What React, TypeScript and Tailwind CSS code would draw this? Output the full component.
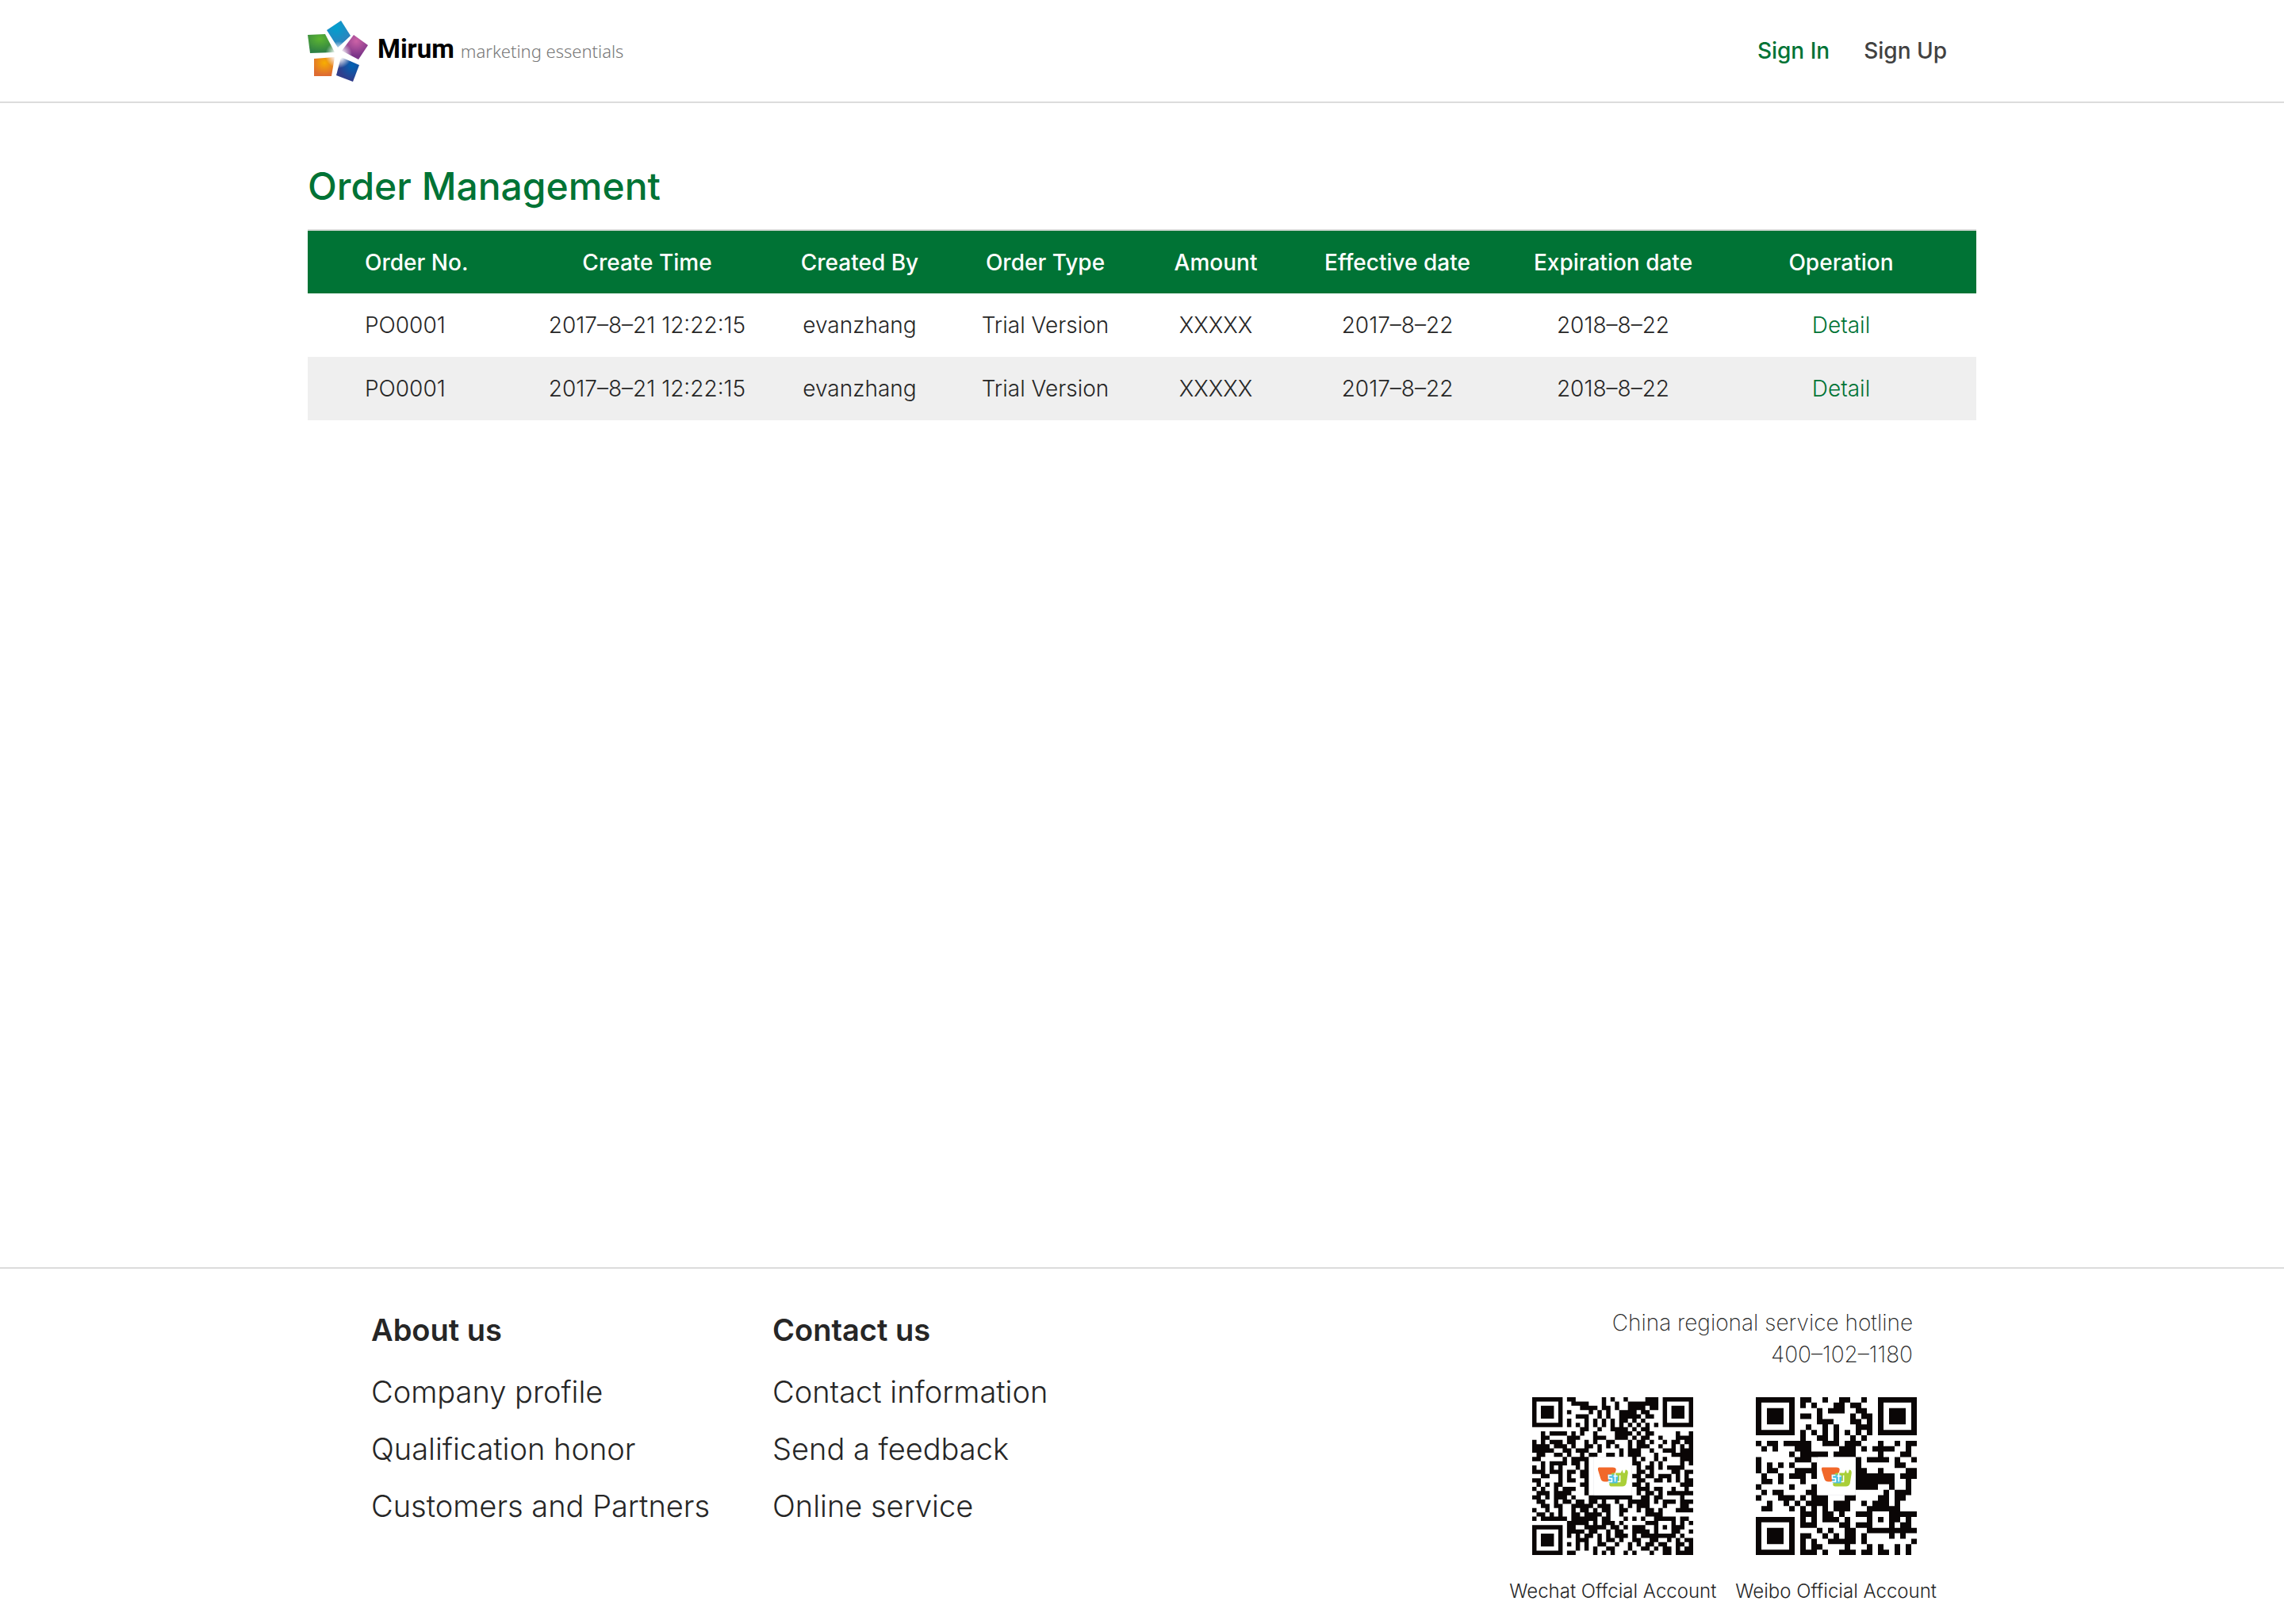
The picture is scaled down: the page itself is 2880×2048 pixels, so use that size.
import React from "react";

const FINDER = ["#######", "#.....#", "#.###.#", "#.###.#", "#.###.#", "#.....#", "#######", "......."];

const withFinders = (top: string[], body: string[], bottom: string[]) => [
  ...top.map((r, i) => `${FINDER[i]}.${r}.${FINDER[i]}`),
  ...body,
  ...bottom.map((r, i) => `${FINDER[i]}.${r}`),
];

const WECHAT_CODE = withFinders(
  [
    "##......#.#..#....###",
    ".####...#..#..#######",
    "...####.##.#..####.##",
    "#....#.#.#..####.##..",
    "..###..#.#..#####.##.",
    "#...#.#.#.#.##.#.#...",
    "#.#.#.#.#.#.#.#.#.#.#",
    "...##..#..####.#.##..",
  ],
  [
    "..#.####.#.#..#....####.#.##.....#..#",
    "..##....###...###..###.#.##..#...####",
    "#.#.###.##..#.#..##...#.##.#..#.##.##",
    "####.###.#..##.#.#.#..#.###..#..#.#.#",
    "#####..##.###..#....#.###..#..###.###",
    ".##..##.#..#.##..##.#.###...#...#####",
    "##.....#.####..........#.#..#.#...###",
    "..#.####.##.#..........##..#.#....#.#",
    "#.#.#.#...#.#...........#.##.#.####..",
    "###.###.##.##...........##.#....##.##",
    "..##..#.#..##..........##.##.###.#.#.",
    "##....#.##..#...........##..##.#.#.##",
    ".#.#.##....##..........##.#.......###",
    "#.#..#.###..#...........###.##..#..#.",
    ".###.####...#...........#.##.#.######",
    "##.#.###.#...##########..##.##....#..",
    ".##..#.##.##.##.#..#..#####.#.###.###",
    "..##.##..#####.###..#.#.###...#...##.",
    "#..#..#..#.##.#.##..##..#.##.#...####",
    ".##.#.#..##.####.#..#.....####.......",
    "#.######.######.##...#.#.#..#####.##.",
    "........#####.#.###.#.....###...#.#.#",
  ],
  [
    "##..#####.##.#.###..#.#.###..",
    "####.##..#.##..####.#...##..#",
    "#.#.##.#.#.###.#.########.#..",
    "..###..#.##.#..##..##..#.#.##",
    "#.#.#..##..#..#.#.##.##..##.#",
    "..#.#.#..##...#..##.#.##.#.##",
    "##....#.#.#..#.#...#..##.####",
  ],
);

const WEIBO_CODE = withFinders(
  [
    "##..#..##..#.",
    "#.#...##.##..",
    "...#.###..##.",
    "##.#.....#.##",
    "...###...##.#",
    ".#..#.#...###",
    "#.#.#.#.#.#.#",
    "#..##.#..#.#.",
  ],
  [
    "#.##.#####..###.###...#..#.##",
    ".#.#...###.....###.#.####..#.",
    "......#.#####.####....#...##.",
    "#......###........#.####.#..#",
    "#.#.#.#...#.......#......##..",
    "#.##...####.......##..#....##",
    ".#..#.###.#.......#######.###",
    ".##.#...#.........#######..#.",
    "#.....#...#.......####..#..#.",
    ".#.##....##............#.###.",
    "#...###.#.###...##....##.##..",
    "..#..#.#.####.###..#.###.#...",
    ".##...#.#.#.#.###...######...",
    "........###.##.#..###...#####",
  ],
  [
    "#.#.###.#...#.#.##.#.",
    "###....##.###...#.##.",
    "...#.#..##..#########",
    "##..#.#.##.#....#.#..",
    "#.#..#####.#........#",
    "#.##....#...#.#..#.#.",
    "###.#..###.##.##.#.#.",
  ],
);

function QrCode({ rows, label }: { rows: string[]; label: string }) {
  const n = rows.length;
  const d = rows
    .map((row, y) =>
      Array.from(row.matchAll(/#+/g))
        .map((m) => `M${m.index} ${y}h${m[0].length}v1h-${m[0].length}z`)
        .join(""),
    )
    .join("");
  return (
    <svg viewBox={`0 0 ${n} ${n}`} preserveAspectRatio="none" className="h-[199px] w-[203px]" role="img" aria-label={label}>
      <path d={d} fill="#0a0606" />
      <svg x={n * 0.38} y={n * 0.38} width={n * 0.24} height={n * 0.24} viewBox="0 0 48 48">
        <rect width="48" height="48" rx="2" fill="#fff" stroke="#e4e4ea" strokeWidth="0.8" />
        <path d="M6 13h18q5 0 4 4l-3 10q-1 4-5 4h-6q-4 0-5-4L6 17q-1-4 1-4z" fill="#f1682a" />
        <path d="M24 20h10l2-4 1 4h2l1-4q3 0 3 4l-2 13q-1 4-5 4H23q-4 0-3-4l1-9q1-4 3-4z" fill="#a9cf38" />
        <path d="M18 22h10l3 2-1 9h-8l-3-1z" fill="#4dc1e2" />
        <path d="M23 23h-4v4h4v4h-5M27 20v11M25 24h5M33 23v8h-3" fill="none" stroke="#fff" strokeWidth="1.5" />
      </svg>
    </svg>
  );
}

function LogoMark() {
  return (
    <svg viewBox="0 0 76 78" className="mt-[2px] h-[78px] w-[76px]" aria-hidden="true">
      <defs>
        <radialGradient id="blue" cx="0.4" cy="0.25" r="0.7">
          <stop offset="0" stopColor="#00a0cf" />
          <stop offset="1" stopColor="#3380bb" />
        </radialGradient>
        <radialGradient id="purple" cx="0.55" cy="0.25" r="0.6">
          <stop offset="0" stopColor="#cc62a6" />
          <stop offset="1" stopColor="#7b3488" />
        </radialGradient>
        <radialGradient id="navy" cx="0.7" cy="0.35" r="0.6">
          <stop offset="0" stopColor="#0063b4" />
          <stop offset="1" stopColor="#303d8b" />
        </radialGradient>
        <radialGradient id="orange" cx="0.5" cy="0.3" r="0.65">
          <stop offset="0" stopColor="#f7ae00" />
          <stop offset="1" stopColor="#de6c32" />
        </radialGradient>
        <radialGradient id="green" cx="0.45" cy="0.25" r="0.7">
          <stop offset="0" stopColor="#5cb531" />
          <stop offset="1" stopColor="#2f8044" />
        </radialGradient>
        <radialGradient id="glow" gradientUnits="userSpaceOnUse" cx="39" cy="43" r="17">
          <stop offset="0.3" stopColor="#fff" />
          <stop offset="1" stopColor="#fff" stopOpacity="0" />
        </radialGradient>
      </defs>
      <path d="M42 0L54 19L38 34L24 12z" fill="url(#blue)" />
      <path d="M58 18L76 31L64 49L43 38z" fill="url(#purple)" />
      <path d="M42 46L65 56L57 77L36 69z" fill="url(#navy)" />
      <path d="M8 48L34 46L30 70L8 70z" fill="url(#orange)" />
      <path d="M0 18L22 17L34 40L3 41z" fill="url(#green)" />
      <circle cx="39" cy="43" r="17" fill="url(#glow)" />
    </svg>
  );
}

const HEADERS = ["Order No.", "Create Time", "Created By", "Order Type", "Amount", "Effective date", "Expiration date", "Operation"];

const ORDERS = [
  ["PO0001", "2017–8–21 12:22:15", "evanzhang", "Trial Version", "XXXXX", "2017–8–22", "2018–8–22"],
  ["PO0001", "2017–8–21 12:22:15", "evanzhang", "Trial Version", "XXXXX", "2017–8–22", "2018–8–22"],
];

function OrderTable() {
  return (
    <table className="w-full table-fixed border-t-2 border-[#d9dcda] text-center text-[28px] leading-10 whitespace-nowrap">
      <colgroup>
        <col className="w-[253px]" />
        <col className="w-[350px]" />
        <col className="w-[186px]" />
        <col className="w-[282px]" />
        <col className="w-[148px]" />
        <col className="w-[310px]" />
        <col className="w-[234px]" />
        <col className="w-[341px]" />
      </colgroup>
      <thead>
        <tr className="h-20 bg-[#007335] text-white">
          {HEADERS.map((h) => (
            <th key={h} scope="col" className="p-0 font-medium first:pl-[72px] first:text-left">
              {h}
            </th>
          ))}
        </tr>
      </thead>
      <tbody>
        {ORDERS.map((cells, i) => (
          <tr key={i} className="h-20 even:bg-[#efefef]">
            {cells.map((c, j) => (
              <td key={j} className="p-0 font-light first:pl-[72px] first:text-left">
                {c}
              </td>
            ))}
            <td className="p-0">
              <a href="#detail" className="font-light text-[#007335]">
                Detail
              </a>
            </td>
          </tr>
        ))}
      </tbody>
    </table>
  );
}

function LinkColumn({ title, links }: { title: string; links: string[] }) {
  return (
    <nav aria-label={title} className="text-[38px] leading-[72px]">
      <h2 className="mb-[6px] font-semibold">{title}</h2>
      <ul className="font-light">
        {links.map((l) => (
          <li key={l}>
            <a href="#info">{l}</a>
          </li>
        ))}
      </ul>
    </nav>
  );
}

function Account({ rows, name }: { rows: string[]; name: string }) {
  return (
    <figure className="flex flex-col items-center">
      <QrCode rows={rows} label={name} />
      <figcaption className="mt-[30px] text-2xl font-light">{name}</figcaption>
    </figure>
  );
}

export default function App() {
  return (
    <div className="flex min-h-screen flex-col bg-white font-['Inter',sans-serif] text-[#262626]">
      <header className="border-b-2 border-[#dcdcdc]">
        <div className="mx-auto flex h-32 w-full max-w-[2104px] items-center justify-between">
          <a href="#home" className="flex items-center">
            <LogoMark />
            <span className="ml-3 pb-1 font-['Roboto',sans-serif] text-[33px] leading-10 font-bold text-black">Mirum</span>
            <span className="ml-2 font-['Noto_Sans',sans-serif] text-[22px] leading-10 font-light text-[#777]">marketing essentials</span>
          </a>
          <nav aria-label="Account" className="mr-[37px] flex gap-[43px] text-[28px] leading-10 font-medium">
            <a href="#sign-in" className="text-[#007335]">
              Sign In
            </a>
            <a href="#sign-up" className="text-[#414141]">
              Sign Up
            </a>
          </nav>
        </div>
      </header>

      <main className="mx-auto w-full max-w-[2104px] flex-1 pt-[73px]">
        <h1 className="mb-[22px] text-5xl leading-[64px] font-medium text-[#007335]">Order Management</h1>
        <OrderTable />
      </main>

      <footer className="border-t-2 border-[#dcdcdc]">
        <div className="mx-auto flex w-full max-w-[2104px] justify-between pt-[41px] pb-[25px] pl-20">
          <div className="grid grid-cols-[506px_auto]">
            <LinkColumn title="About us" links={["Company profile", "Qualification honor", "Customers and Partners"]} />
            <LinkColumn title="Contact us" links={["Contact information", "Send a feedback", "Online service"]} />
          </div>
          <div className="mr-[50px] pt-[7px]">
            <p className="mr-[30px] text-right text-[28px] leading-10 font-extralight">
              China regional service hotline
              <br />
              400–102–1180
            </p>
            <div className="mt-[34px] flex gap-6">
              <Account rows={WECHAT_CODE} name="Wechat Offcial Account" />
              <Account rows={WEIBO_CODE} name="Weibo Official Account" />
            </div>
          </div>
        </div>
      </footer>
    </div>
  );
}
